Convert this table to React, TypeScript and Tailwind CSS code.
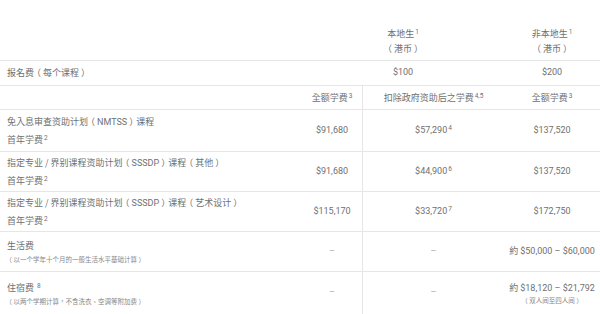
const cjk = { fontFamily: "'Noto Sans CJK TC', Roboto, sans-serif" };

const Sup = ({ children }: { children: React.ReactNode }) => (
  <sup className="text-[6.5px] -top-[3px] ml-[1px] font-[Roboto]">{children}</sup>
);

// 数字 / 英文用 Roboto
const N = ({ children }: { children: React.ReactNode }) => <span className="font-[Roboto]">{children}</span>;

// 全角括号，括号居中
const P = ({ children }: { children: React.ReactNode }) => (
  <>
    <span className="-ml-[0.22em] mr-[0.22em]">（</span>
    {children}
    <span className="ml-[0.22em] -mr-[0.22em]">）</span>
  </>
);

const Row = ({
  cells,
  className = '',
}: {
  cells: React.ReactNode[];
  className?: string;
}) => (
  <div className={`grid grid-cols-[302px_60px_142px_96px] border-b border-[#e6e6e6] ${className}`}>
    <div className="pl-[7px] flex flex-col justify-center">{cells[0]}</div>
    <div className="flex items-center justify-center text-center">{cells[1]}</div>
    <div className="flex items-center justify-center text-center border-l border-[#e6e6e6]">{cells[2]}</div>
    <div className="flex flex-col items-center justify-center text-center">{cells[3]}</div>
  </div>
);

const Title = ({ a, b }: { a: React.ReactNode; b: React.ReactNode }) => (
  <div className="leading-[17px]">
    <div>{a}</div>
    <div>{b}</div>
  </div>
);

const Dash = () => <span className="text-[#aaa] font-[Roboto]">–</span>;

export default function App() {
  return (
    <div
      className="w-[600px] h-[314px] bg-white text-[9px] text-[#707070] overflow-hidden whitespace-nowrap"
      style={cjk}
    >
      {/* 表头 */}
      <div className="grid grid-cols-[302px_202px_96px] h-[61px] border-b border-[#e6e6e6]">
        <div />
        <div className="flex flex-col items-center justify-end pb-[4px] leading-[15px]">
          <div>
            本地生<Sup>1</Sup>
          </div>
          <div>
            <P>港币</P>
          </div>
        </div>
        <div className="flex flex-col items-center justify-end pb-[4px] leading-[15px]">
          <div>
            非本地生<Sup>1</Sup>
          </div>
          <div>
            <P>港币</P>
          </div>
        </div>
      </div>

      {/* 报名费 */}
      <div className="grid grid-cols-[302px_202px_96px] h-[25px] border-b border-[#e6e6e6]">
        <div className="pl-[7px] flex items-center">
          <span>
            报名费<P>每个课程</P>
          </span>
        </div>
        <div className="flex items-center justify-center">
          <N>$100</N>
        </div>
        <div className="flex items-center justify-center">
          <N>$200</N>
        </div>
      </div>

      <Row
        className="h-[24px]"
        cells={[
          '',
          <span>
            全额学费<Sup>3</Sup>
          </span>,
          <span>
            扣除政府资助后之学费<Sup>4,5</Sup>
          </span>,
          <span>
            全额学费<Sup>3</Sup>
          </span>,
        ]}
      />

      <Row
        className="h-[42px]"
        cells={[
          <Title
            a={
              <>
                免入息审查资助计划
                <P>
                  <N>NMTSS</N>
                </P>
                课程
              </>
            }
            b={
              <>
                首年学费<Sup>2</Sup>
              </>
            }
          />,
          <N>$91,680</N>,
          <N>
            $57,290<Sup>4</Sup>
          </N>,
          <N>$137,520</N>,
        ]}
      />

      <Row
        className="h-[40px]"
        cells={[
          <Title
            a={
              <>
                指定专业 / 界别课程资助计划
                <P>
                  <N>SSSDP</N>
                </P>
                课程<P>其他</P>
              </>
            }
            b={
              <>
                首年学费<Sup>2</Sup>
              </>
            }
          />,
          <N>$91,680</N>,
          <N>
            $44,900<Sup>6</Sup>
          </N>,
          <N>$137,520</N>,
        ]}
      />

      <Row
        className="h-[40px]"
        cells={[
          <Title
            a={
              <>
                指定专业 / 界别课程资助计划
                <P>
                  <N>SSSDP</N>
                </P>
                课程<P>艺术设计</P>
              </>
            }
            b={
              <>
                首年学费<Sup>2</Sup>
              </>
            }
          />,
          <N>$115,170</N>,
          <N>
            $33,720<Sup>7</Sup>
          </N>,
          <N>$172,750</N>,
        ]}
      />

      <Row
        className="h-[40px]"
        cells={[
          <div>
            <div className="leading-[15px]">生活费</div>
            <div className="text-[6.5px] text-[#888] leading-[12px]">
              <P>以一个学年十个月的一般生活水平基础计算</P>
            </div>
          </div>,
          <Dash />,
          <Dash />,
          <span>
            約 <N>$50,000 – $60,000</N>
          </span>,
        ]}
      />

      <Row
        className="h-[42px] border-b-0"
        cells={[
          <div>
            <div className="leading-[15px]">
              住宿费 <Sup>8</Sup>
            </div>
            <div className="text-[6.5px] text-[#888] leading-[12px]">
              <P>以两个学期计算，不含洗衣、空调等附加费</P>
            </div>
          </div>,
          <Dash />,
          <Dash />,
          <>
            <div className="leading-[14px]">
              約 <N>$18,120 – $21,792</N>
            </div>
            <div className="text-[6.5px] text-[#888] leading-[10px]">
              <P>双人间至四人间</P>
            </div>
          </>,
        ]}
      />
    </div>
  );
}
